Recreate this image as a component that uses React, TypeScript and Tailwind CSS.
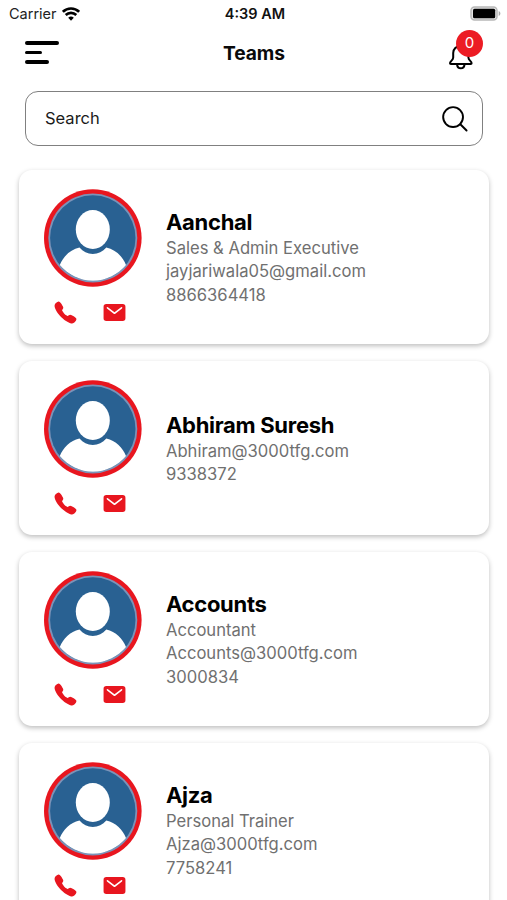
import * as React from 'react';
import { IoCall, IoMail } from 'react-icons/io5';

type Member = {
  name: string;
  details: string[];
};

const MEMBERS: Member[] = [
  { name: 'Aanchal', details: ['Sales & Admin Executive', 'jayjariwala05@gmail.com', '8866364418'] },
  { name: 'Abhiram Suresh', details: ['Abhiram@3000tfg.com', '9338372'] },
  { name: 'Accounts', details: ['Accountant', 'Accounts@3000tfg.com', '3000834'] },
  { name: 'Ajza', details: ['Personal Trainer', 'Ajza@3000tfg.com', '7758241'] },
];

function WifiIcon() {
  return (
    <svg width="18" height="14" viewBox="0 0 18 14" fill="none" stroke="#000" strokeWidth="2.6">
      <path d="M0.9 4.8a11.6 11.6 0 0 1 16.2 0" />
      <path d="M3.7 8a7.6 7.6 0 0 1 10.6 0" />
      <path d="M9 13.7 6.2 10.8a4 4 0 0 1 5.6 0z" fill="#000" stroke="none" />
    </svg>
  );
}

function BatteryIcon() {
  return (
    <svg width="31" height="15" viewBox="0 0 31 15">
      <rect x="1" y="1" width="26" height="13" rx="3.5" fill="#e4e4e4" stroke="#b8b8b8" strokeWidth="1.5" />
      <rect x="3" y="2.8" width="22.2" height="9.4" rx="1.5" fill="#000" />
      <path d="M28.7 5v5c1-.4 1.7-1.4 1.7-2.5S29.7 5.4 28.7 5z" fill="#aaa" />
    </svg>
  );
}

function StatusBar() {
  return (
    <div className="grid h-7 grid-cols-3 items-center pr-[6px] pl-[9px]">
      <div className="flex items-center gap-[5px] text-[14.5px] text-[#222]">
        Carrier
        <WifiIcon />
      </div>
      <span className="text-center text-[14.5px] font-semibold text-[#111]">4:39 AM</span>
      <div className="flex justify-end pb-px">
        <BatteryIcon />
      </div>
    </div>
  );
}

function Header() {
  return (
    <header className="flex h-[50px] items-center justify-between pr-[24px] pl-[25px]">
      <button aria-label="Menu" className="flex w-[59px] flex-col gap-[6px] pb-px">
        <span className="h-[3.4px] w-[34px] rounded-sm bg-black" />
        <span className="h-[3.4px] w-[17px] rounded-sm bg-black" />
        <span className="h-[3.4px] w-[24px] rounded-sm bg-black" />
      </button>
      <h1 className="text-[19.2px] font-bold tracking-[-0.1px] text-[#0a0a0a]">Teams</h1>
      <button aria-label="Notifications" className="relative h-[46px] w-[59px]">
        <svg
          className="absolute top-[13px] left-[24px]"
          width="26"
          height="28"
          viewBox="0 0 26 28"
          fill="none"
          stroke="#000"
          strokeWidth="2"
          strokeLinejoin="round"
        >
          <path d="M12.8 3c-4.6 0-7.6 3-7.6 7v4.5c0 2.8-3.2 3.8-3.2 5.7 0 .6.3.8.9.8h19.8c.6 0 .9-.2.9-.8 0-1.9-3.2-2.9-3.2-5.7V10c0-4-3-7-7.6-7z" />
          <path d="M9 21.3c.3 2.4 1.8 4 3.8 4s3.5-1.6 3.8-4" />
        </svg>
        <span className="absolute top-0 right-0 flex size-[27px] items-center justify-center rounded-full bg-[#ec1c24] text-[15px] text-white">
          0
        </span>
      </button>
    </header>
  );
}

function SearchBar() {
  return (
    <div className="mx-[25px] mt-[13px] flex h-[55px] w-[458px] items-center justify-between rounded-[13px] border-[1.5px] border-[#808080] pr-[14px] pl-[19px]">
      <span className="text-[16.5px] text-[#1a1a1a]">Search</span>
      <svg width="26" height="26" viewBox="0 0 27 27" fill="none" stroke="#000" strokeWidth="2" strokeLinecap="round">
        <circle cx="11.5" cy="11.5" r="10.3" />
        <path d="m19 19 6.5 6.5" />
      </svg>
    </div>
  );
}

function Avatar() {
  return (
    <svg width="98" height="98" viewBox="0 0 98 98">
      <circle cx="48.8" cy="49" r="48.8" fill="#e8161f" />
      <circle cx="48.8" cy="49" r="44.5" fill="#7c93b8" />
      <circle cx="48.8" cy="49" r="42.7" fill="#296192" />
      <ellipse cx="48.8" cy="40.5" rx="17" ry="19.6" fill="#fff" />
      <path
        d="M15.8 76C19 68 26 60.5 35.5 58.5C39 62.8 43.5 65 48.8 65S58.8 62.8 62.3 58.5C71.8 60.5 79 68 82 76A42.7 42.7 0 0 1 15.8 76z"
        fill="#fff"
      />
    </svg>
  );
}

function MemberCard({ member }: { member: Member }) {
  return (
    <li className="flex h-[174px] shrink-0 rounded-[13px] bg-white pl-[24.5px] shadow-[0_2px_5px_rgba(0,0,0,0.26)]">
      <div className="flex w-[98px] shrink-0 flex-col pt-[19px]">
        <Avatar />
        <div className="mt-[12.5px] flex items-center gap-[24px] pl-[9px] text-[#e8161f]">
          <button aria-label={`Call ${member.name}`}>
            <IoCall size={25} />
          </button>
          <button aria-label={`Email ${member.name}`}>
            <IoMail size={25} />
          </button>
        </div>
      </div>
      <div className="ml-[24.5px] flex flex-col justify-center pt-px">
        <h2 className="text-[22px] leading-[28px] font-bold tracking-[-0.3px] text-black">{member.name}</h2>
        <div className="pt-px">
          {member.details.map((line) => (
            <p key={line} className="text-[16.6px] leading-[23.3px] text-[#707070]">
              {line}
            </p>
          ))}
        </div>
      </div>
    </li>
  );
}

export default function App() {
  return (
    <div className="h-[900px] w-[507px] overflow-hidden bg-white font-[Inter,sans-serif]">
      <StatusBar />
      <Header />
      <SearchBar />
      <ul className="mt-[24px] ml-[19px] flex w-[470px] flex-col gap-[17px]">
        {MEMBERS.map((member) => (
          <MemberCard key={member.name} member={member} />
        ))}
      </ul>
    </div>
  );
}
